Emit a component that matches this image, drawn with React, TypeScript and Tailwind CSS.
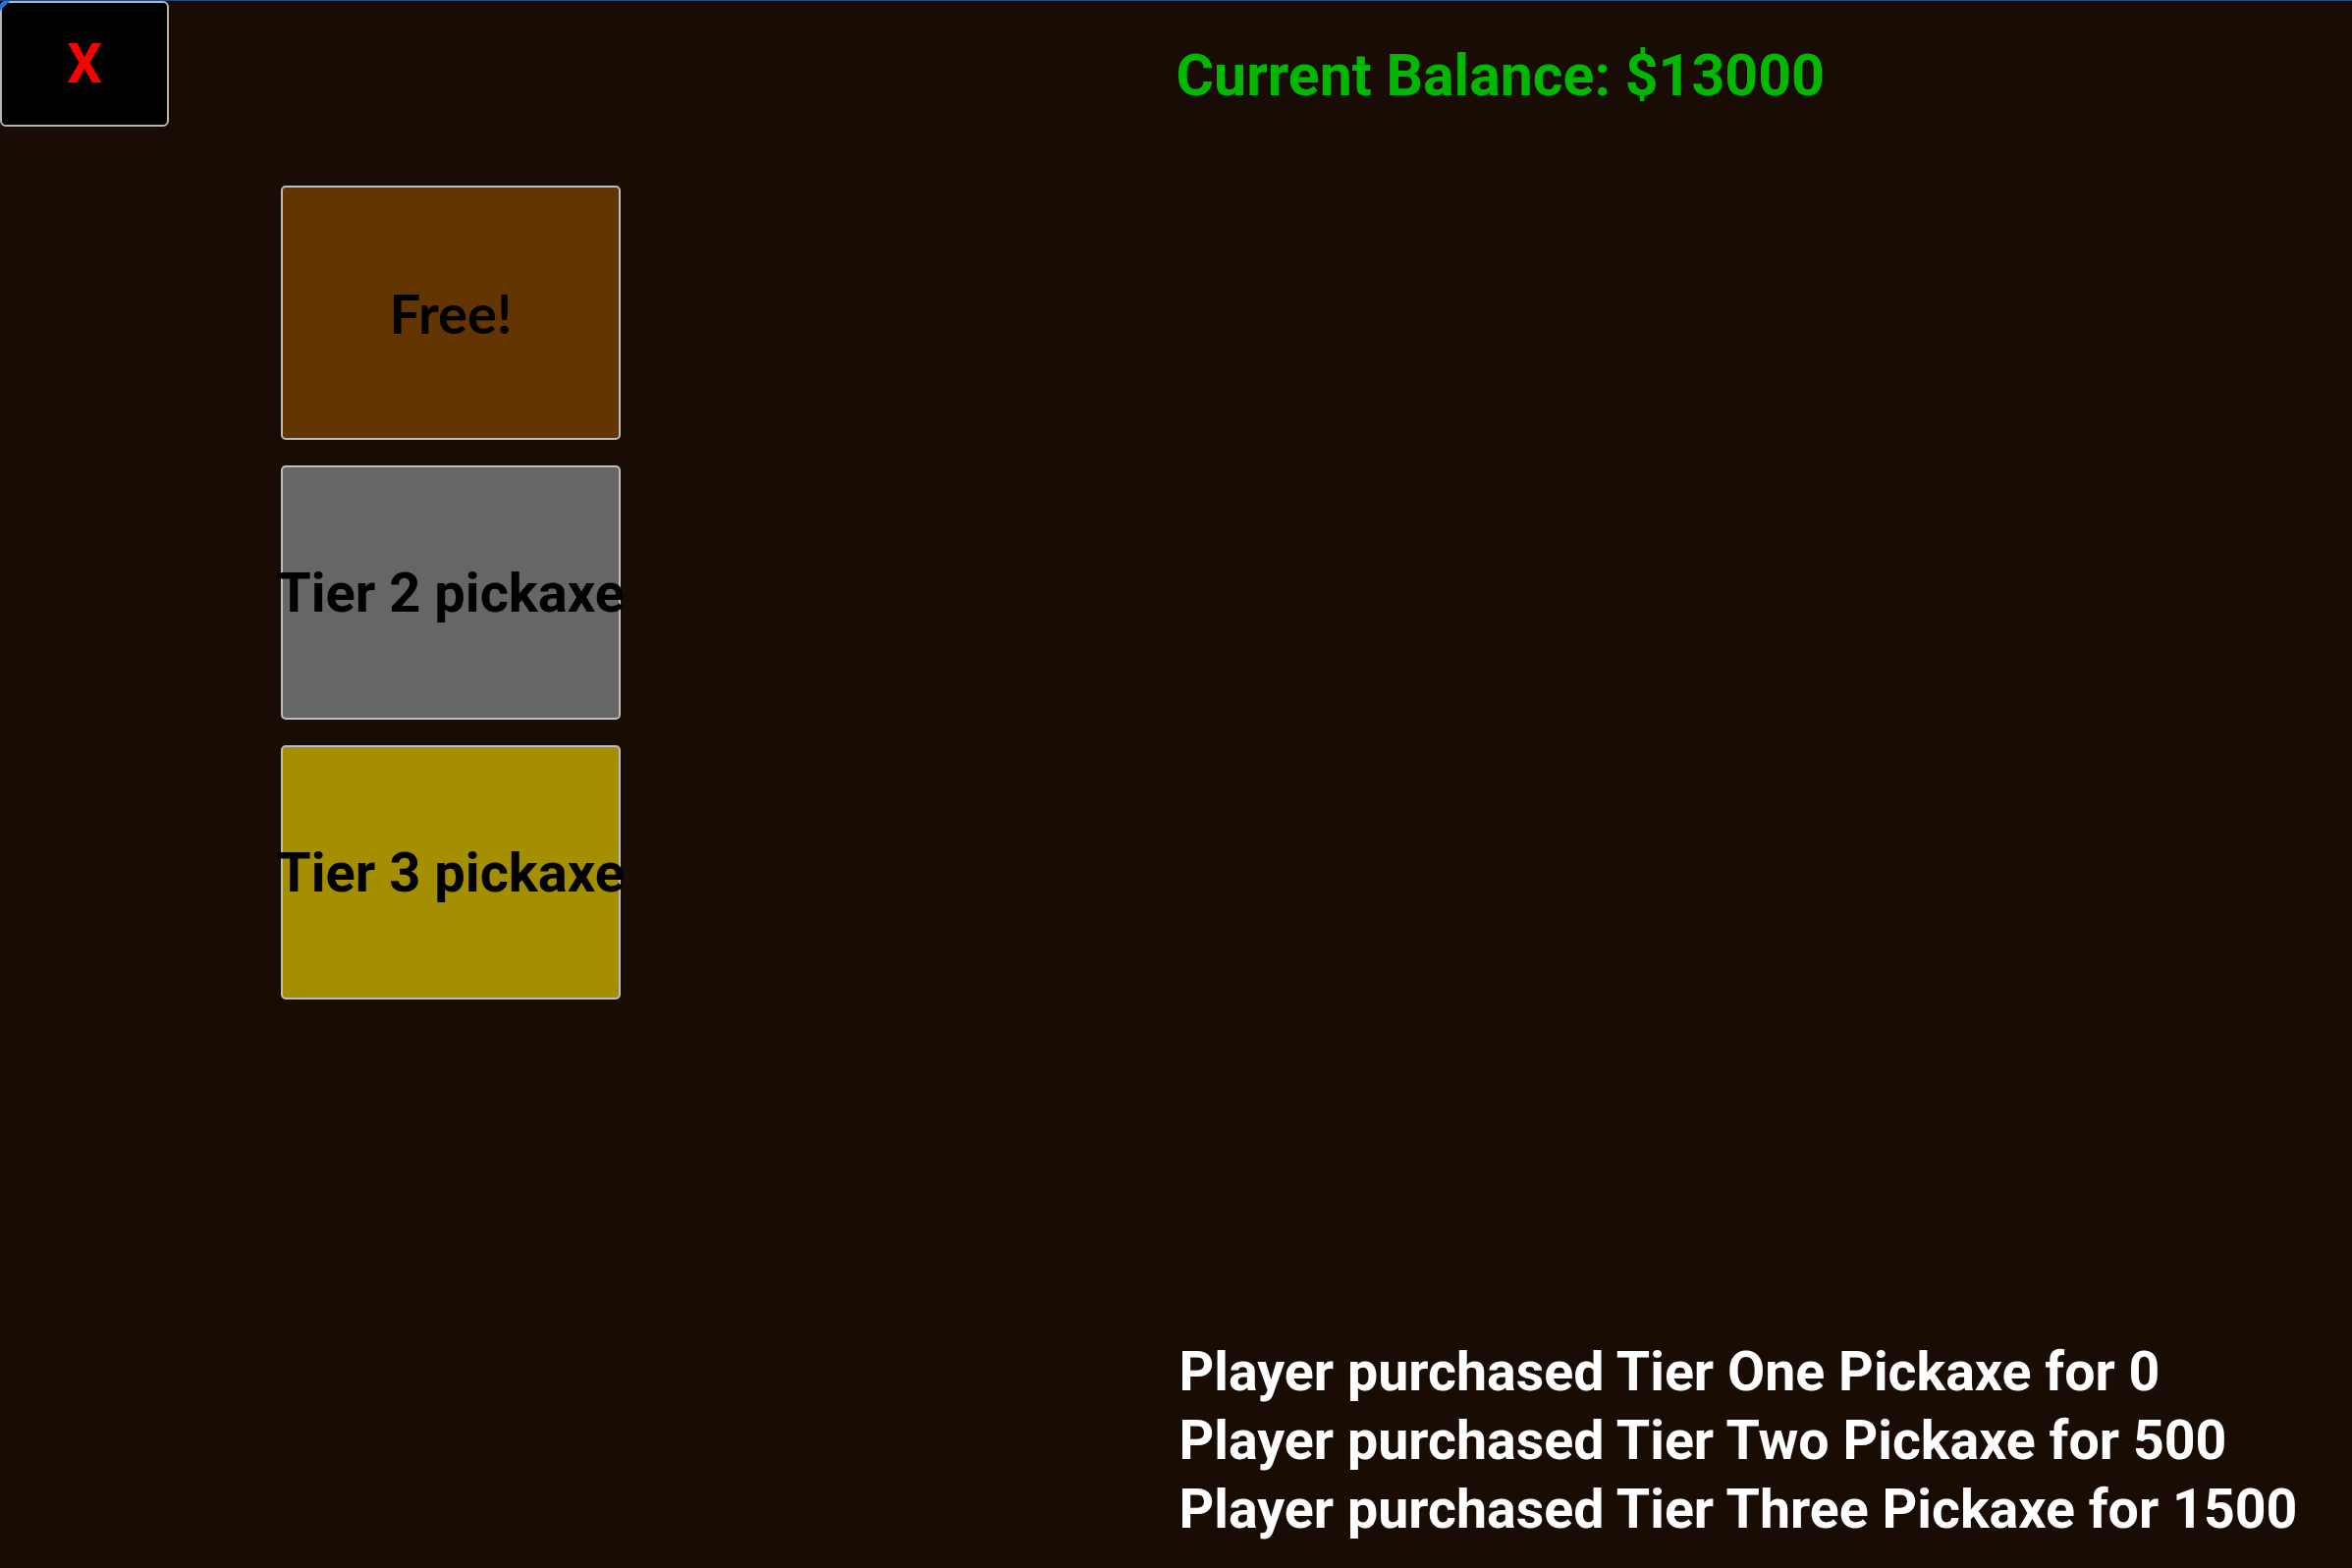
import React, { useState } from 'react';

const picaretas = [
    { id: 1, rotulo: 'Free!', cor: 'bg-[#633500]', fonte: "font-['Lato',sans-serif]" },
    { id: 2, rotulo: 'Tier 2 pickaxe', cor: 'bg-[#666666]', fonte: "font-['Roboto',sans-serif]" },
    { id: 3, rotulo: 'Tier 3 pickaxe', cor: 'bg-[#a38f00]', fonte: "font-['Roboto',sans-serif]" },
];

const historico = [
    'Player purchased Tier One Pickaxe for 0',
    'Player purchased Tier Two Pickaxe for 500',
    'Player purchased Tier Three Pickaxe for 1500',
];

export default function App() {
    const [saldo] = useState(13000);

    return (
        <div className="h-screen w-full flex bg-[#180c05] border-t border-[#1d4a86] font-['Roboto',sans-serif] overflow-hidden">
            {/* Coluna esquerda: fechar + loja */}
            <div className="w-1/2 flex flex-col">
                <button className="relative w-[172px] h-[128px] bg-black border-2 border-[#b4b4b4] rounded-md flex items-center justify-center">
                    <span className="absolute -top-[2px] -left-[2px] w-0 h-0 border-t-[10px] border-r-[10px] border-t-[#1a73e8] border-r-transparent rounded-tl-md" />
                    <span className="text-[56px] font-bold text-[#ff0000] leading-none">X</span>
                </button>

                <div className="ml-[286px] mt-[60px] flex flex-col gap-[26px]">
                    {picaretas.map(p => (
                        <button
                            key={p.id}
                            className={`w-[346px] h-[259px] border-2 border-[#bdbdbd] rounded-[5px] flex items-center justify-center whitespace-nowrap text-black text-[56px] font-bold ${p.cor} ${p.fonte}`}
                        >
                            {p.rotulo}
                        </button>
                    ))}
                </div>
            </div>

            {/* Coluna direita: saldo + log */}
            <div className="w-1/2 flex flex-col justify-between">
                <div className="pt-[32px] text-[59px] font-bold text-[#00b800]">
                    Current Balance: ${saldo}
                </div>
                <div className="pb-[24px] pl-[3px] text-white text-[55.5px] font-bold leading-[70px]">
                    {historico.map((linha, i) => (
                        <div key={i}>{linha}</div>
                    ))}
                </div>
            </div>
        </div>
    );
}
